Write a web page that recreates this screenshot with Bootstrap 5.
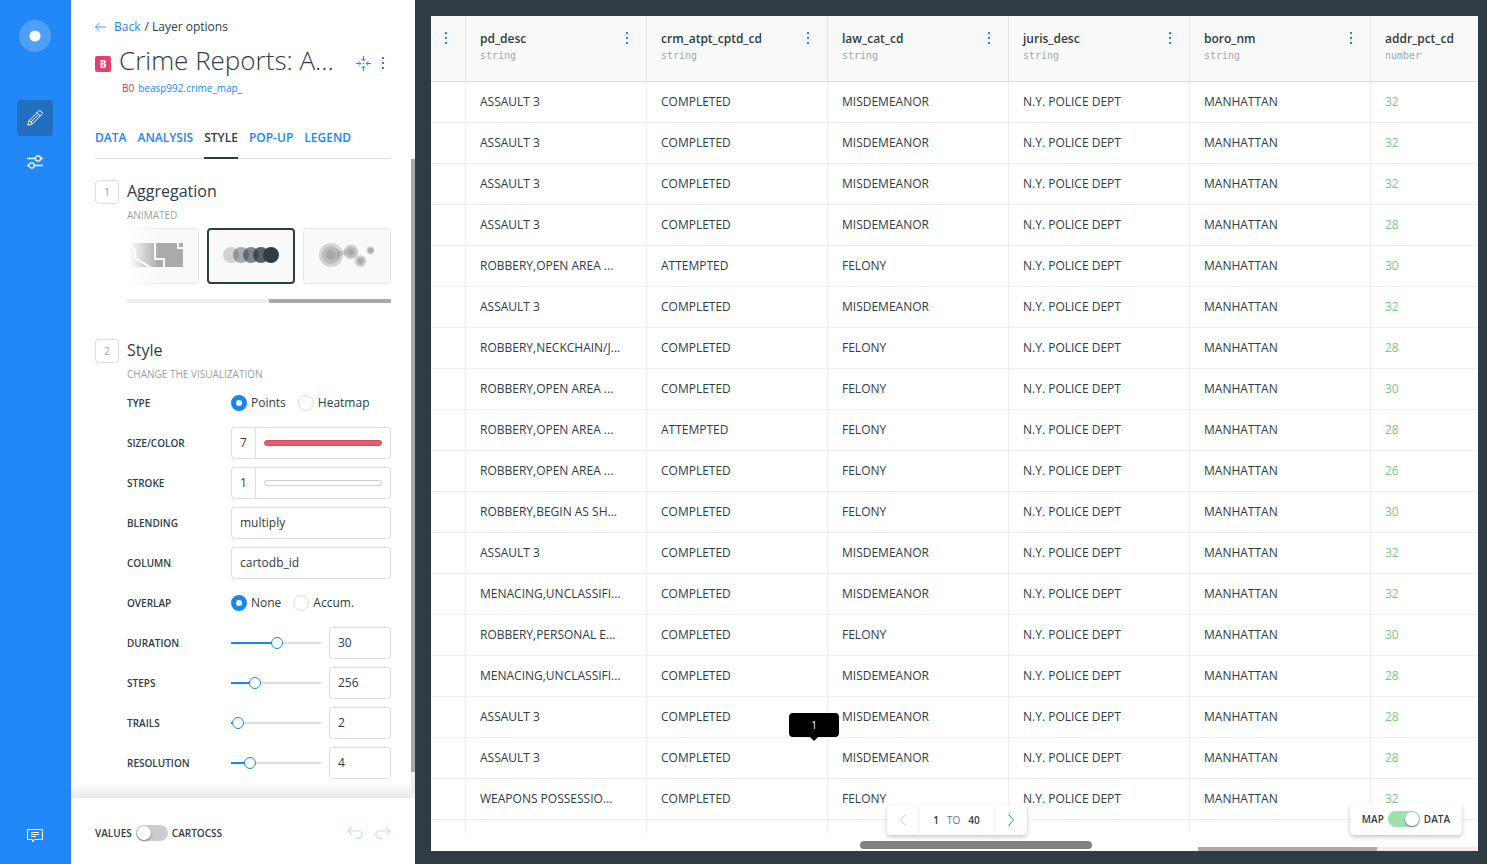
<!DOCTYPE html>
<html lang="en">
<head>
<meta charset="utf-8">
<meta name="viewport" content="width=device-width, initial-scale=1">
<title>Layer options</title>
<link href="https://cdn.jsdelivr.net/npm/bootstrap@5.3.0/dist/css/bootstrap.min.css" rel="stylesheet">
<style>
:root { --ink:#2e3c43; --blue:#1785fb; --line:#ddd; --soft:#eee; --mute:#979ea1; }
body { font-family:"Open Sans",sans-serif; font-size:12px; line-height:16px; color:var(--ink); background:var(--ink); }
a { color:var(--blue); text-decoration:none; }
button { background:none; border:0; padding:0; color:var(--blue); }
svg { display:block; }
.rail { width:71px; background:#2288f7; padding:20px 0 21px; }
.rail-btn { width:36px; height:36px; border-radius:4px; margin-left:17px; color:#fff; }
.rail-btn.on { background:#236fbf; }
.logo-link { margin:0 0 48px 19px; }
.panel { width:344px; }
.panel-head { padding:19px 24px 0; }
.title { font-size:26px; font-weight:300; line-height:34px; padding-bottom:2px; }
.layer-tag { width:16px; height:16px; margin-top:6px; border-radius:2px; background:#e7406f; color:#fff; font-size:10px; font-weight:700; }
.subline { font-size:10px; padding-left:27px; margin-top:1px; }
.pink { color:#d92b5c; }
.tabs { border-bottom:1px solid var(--line); margin-top:34px; gap:11px; }
.tabs a { font-weight:600; padding:0 0 11px; margin-bottom:-1px; border-bottom:2px solid transparent; }
.tabs a.active { color:var(--ink); border-color:var(--ink); }
.scroller { overflow:hidden; min-height:0; }
.scroll-body { padding:21px 20px 0 24px; }
.vbar { width:4px; background:var(--soft); }
.vbar div { height:96%; background:#aaa; }
.scroller::after { content:""; position:absolute; left:0; right:4px; bottom:0; height:16px; background:linear-gradient(rgba(0,0,0,0),rgba(0,0,0,.09)); }
.step-no { width:24px; height:24px; border:1px solid var(--line); border-radius:4px; font-size:10px; color:var(--mute); }
.sect { font-size:16px; line-height:22px; font-weight:400; margin:0; }
.hint { font-size:10px; line-height:14px; color:#999fa2; margin:6px 0 0; }
.section-body { width:264px; }
.carousel-strip { overflow:hidden; margin-top:6px; }
.carousel-strip::before { content:""; position:absolute; z-index:1; left:0; top:0; bottom:0; width:32px; background:linear-gradient(90deg,#fff 5%,rgba(255,255,255,0)); }
.opt { flex:0 0 88px; height:56px; border:1px solid #e8e8e8; border-radius:4px; background:#f9f9f9; padding-bottom:2px; }
.opt.on { border:2px solid var(--ink); }
.hbar { height:4px; background:var(--soft); margin-top:15px; }
.hbar div { height:4px; width:122px; background:#aaa; }
.fields { margin-top:6px; gap:8px; }
.field-row { height:32px; }
.lbl { width:104px; font-size:10px; font-weight:600; }
.ctl { width:160px; }
.box { width:100%; height:32px; border:1px solid var(--line); border-radius:4px; padding:0 8px 2px; color:var(--ink); background:#fff; appearance:none; font-size:12px; outline-color:var(--blue); }
select.box { padding-bottom:0; }
.box-num { width:62px; }
.split { width:100%; height:32px; border:1px solid var(--line); border-radius:4px; }
.split input { width:23px; height:30px; border:0; border-right:1px solid var(--line); padding:0 0 2px; text-align:center; color:var(--ink); background:none; box-sizing:content-box; }
.swatch { height:6px; border:1px solid #ccc; border-radius:3px; margin:0 8px; }
.swatch.red { background:#eb5b69; border-color:#c85060; }
.dot { appearance:none; width:16px; height:16px; border:1px solid var(--line); border-radius:50%; margin:0 4px 0 0; background:#fff; }
.dot:checked { border:5px solid var(--blue); }
.slide { appearance:none; width:90px; height:12px; margin:0; background:linear-gradient(90deg,var(--blue) var(--fill),var(--line) var(--fill)) center/100% 2px no-repeat; }
.slide::-webkit-slider-thumb { appearance:none; width:12px; height:12px; border:1px solid var(--blue); border-radius:50%; background:#fff; }
.panel-foot { height:66px; padding:4px 24px 0; font-size:10px; font-weight:600; }
.toggle { appearance:none; width:32px; height:16px; border-radius:8px; background:#c9cdcf; margin:0 4px; padding:1px; display:flex; }
.toggle::before { content:""; width:14px; height:14px; border-radius:50%; background:#fff; box-shadow:0 1px 2px rgba(0,0,0,.45); }
.toggle:checked { background:#9fdfb0; justify-content:flex-end; }
.board { margin:16px 9px 13px 16px; min-width:0; }
.sheet { overflow:hidden; min-height:0; }
.grid-table { table-layout:fixed; width:1121px; border-collapse:separate; border-spacing:0; }
.grid-table th { height:66px; background:#f9f9f9; border-right:1px solid #e4e4e4; border-bottom:1px solid var(--line); vertical-align:top; padding:15px 14px 0; font-weight:600; }
.grid-table td { height:41px; border-right:1px solid var(--soft); border-bottom:1px solid var(--soft); padding:0 14px; white-space:nowrap; }
.grid-table tr.tail td { height:20px; border-bottom:0; }
.grid-table .num { color:#6fcc86; }
.col-menu { margin-top:1px; }
.kind { font-family:"DejaVu Sans Mono",monospace; font-size:10px; font-weight:400; color:#a0a6a8; display:block; line-height:18px; }
.name { display:block; }
.strip { height:18px; }
.pill { width:22.1%; height:8px; border-radius:4px; background:#808080; margin:8px 0 0 41%; }
.track { width:26.7%; height:4px; background:var(--soft); }
.track div { width:64%; height:4px; background:#aaa; }
.floaty { background:#fff; border-radius:4px; box-shadow:0 2px 4px rgba(0,0,0,.22); font-size:10px; font-weight:600; }
.pager { left:calc(50% + 2px); transform:translateX(-50%); bottom:16px; width:140px; height:30px; }
.pager button { width:32px; height:26px; }
.pager-text { border:solid #f2f2f2; border-width:0 1px; height:26px; }
.modes { right:16px; bottom:16px; height:32px; padding:0 12px; }
.tip { left:358px; bottom:114px; width:50px; height:24px; background:#000; color:#fff; border-radius:4px; font-size:10px; }
.tip::after { content:""; position:absolute; top:100%; left:50%; margin-left:-4px; border:4px solid transparent; border-top-color:#000; border-bottom:0; }
</style>
</head>
<body>
<div class="d-flex vh-100 overflow-hidden">
  <nav class="rail d-flex flex-column flex-shrink-0" aria-label="Main">
    <a href="#" class="logo-link" aria-label="Home"><svg width="32" height="32"><circle cx="16" cy="16" r="16" fill="#fff" fill-opacity=".2"/><circle cx="16" cy="16" r="5.600" fill="#fff"/></svg></a>
    <button class="rail-btn on d-flex align-items-center justify-content-center" aria-label="Edit"><svg width="16" height="16" fill="none" stroke="#fff"><path d="M.8 15.200l1.200-4.500L11.300 1.400q1.300-1.300 2.700-.200l.8.800q1.100 1.400-.200 2.700L5.300 14zM10 2.700l3.300 3.300M11.300 4.700L3.800 12.200M2 10.700q1.800 0 1.800 1.500 1.500 0 1.500 1.800"/></svg></button>
    <button class="rail-btn d-flex align-items-center justify-content-center mt-2" aria-label="Settings"><svg width="16" height="14" fill="none" stroke="#fff" stroke-width="1.300"><path d="M0 3.500h8.500M13.500 3.500H16M0 10.500h2M7.500 10.500H16"/><circle cx="11" cy="3.500" r="2.600"/><circle cx="4.700" cy="10.500" r="2.600"/></svg></button>
    <button class="rail-btn d-flex align-items-end justify-content-center mt-auto" aria-label="Feedback"><svg width="16" height="14" fill="none" stroke="#fff"><path d="M.5.500h15v10h-8L5.500 13v-2.500h-5zM4 3.500h8M4 5.500h8M4 7.500h5"/></svg></button>
  </nav>

  <aside class="panel bg-white d-flex flex-column flex-shrink-0">
    <header class="panel-head">
      <div class="d-flex align-items-center">
        <a href="#" class="d-flex align-items-center"><svg class="me-2" width="11" height="10" fill="none" stroke="#1785fb" stroke-width=".8"><path d="M11.500 5H.5M4.500.800L.500 5l4 4.200"/></svg>Back</a><span class="ms-1">/ Layer options</span>
      </div>
      <div class="d-flex align-items-center mt-2">
        <span class="layer-tag d-flex align-items-center justify-content-center">B</span>
        <h1 class="title ms-2 mb-0 flex-grow-1 text-nowrap">Crime Reports: A...</h1>
        <button class="me-1 mt-1" aria-label="Center map"><svg width="15" height="15" fill="none" stroke="#1785fb"><path d="M7.500 0v4.500M7.500 15v-4.500M0 7.500h4.500M15 7.500h-4.500M5.300 2.700l2.200 2.200 2.200-2.200M5.300 12.300l2.200-2.200 2.200 2.200M2.700 5.300l2.200 2.200-2.200 2.200M12.300 5.300l-2.200 2.200 2.200 2.200M7 7.500h1"/></svg></button>
        <button class="px-1 mt-1" aria-label="More options"><svg width="8" height="12" fill="#1785fb"><path d="M3 0h2v2H3zM3 5h2v2H3zM3 10h2v2H3z"/></svg></button>
      </div>
      <div class="subline"><span class="pink me-1">B0</span><a href="#">beasp992.crime_map_</a></div>
      <nav class="tabs d-flex" aria-label="Layer sections"><a href="#">DATA</a><a href="#">ANALYSIS</a><a href="#" class="active">STYLE</a><a href="#">POP-UP</a><a href="#">LEGEND</a></nav>
    </header>

    <div class="scroller position-relative d-flex flex-grow-1">
      <div class="scroll-body flex-grow-1">
        <section class="d-flex gap-2 align-items-start">
          <span class="step-no d-flex align-items-center justify-content-center">1</span>
          <div class="section-body">
            <h2 class="sect">Aggregation</h2>
            <p class="hint">ANIMATED</p>
            <div class="carousel-strip position-relative d-flex justify-content-end gap-2">
              <button class="opt d-flex align-items-center justify-content-center" aria-label="Regions"><svg width="56" height="24"><path fill="#aaa" d="M0 0h56v24H0z"/><path d="M0-1l8 8v8l18 11M28-1v17h9v9M51-1v6h6" fill="none" stroke="#f9f9f9" stroke-width="2"/></svg></button>
              <button class="opt on d-flex align-items-center justify-content-center" aria-label="Animated"><svg width="56" height="16" fill="#2e3c43"><circle cx="8" cy="8" r="8" opacity=".2"/><circle cx="18" cy="8" r="8" opacity=".4"/><circle cx="28" cy="8" r="8" opacity=".6"/><circle cx="38" cy="8" r="8" opacity=".8"/><circle cx="48" cy="8" r="8"/></svg></button>
              <button class="opt d-flex align-items-center justify-content-center" aria-label="Pixel"><svg width="56" height="24" fill="#777" fill-opacity=".27"><circle cx="12" cy="12" r="12"/><circle cx="12" cy="12" r="9"/><circle cx="12" cy="12" r="5"/><circle cx="32" cy="9" r="7.500"/><circle cx="32" cy="9" r="5.500"/><circle cx="32" cy="9" r="3"/><path d="M18 6q5 4 9 0v6q-4-1-9 5z"/><circle cx="41.500" cy="18" r="6"/><circle cx="41.500" cy="18" r="4.200"/><circle cx="41.500" cy="18" r="2.500"/><circle cx="51.500" cy="7.500" r="4"/><circle cx="51.500" cy="7.500" r="3"/><circle cx="51.500" cy="7.500" r="2"/></svg></button>
            </div>
            <div class="hbar d-flex justify-content-end"><div></div></div>
          </div>
        </section>

        <section class="d-flex gap-2 align-items-start mt-4 pt-2">
          <span class="step-no d-flex align-items-center justify-content-center mt-1">2</span>
          <div class="section-body mt-1">
            <h2 class="sect">Style</h2>
            <p class="hint">CHANGE THE VISUALIZATION</p>
            <form class="fields d-flex flex-column">
              <div class="field-row d-flex align-items-center"><span class="lbl">TYPE</span><div class="d-flex gap-2 ctl" role="radiogroup" aria-label="Type"><label class="d-flex me-1"><input class="dot" type="radio" name="type" checked>Points</label><label class="d-flex text-nowrap"><input class="dot" type="radio" name="type">Heatmap</label></div></div>
              <div class="field-row d-flex align-items-center"><label class="lbl" for="size">SIZE/COLOR</label><div class="ctl"><div class="split d-flex align-items-center"><input id="size" type="text" value="7"><div class="swatch red flex-grow-1"></div></div></div></div>
              <div class="field-row d-flex align-items-center"><label class="lbl" for="stroke">STROKE</label><div class="ctl"><div class="split d-flex align-items-center"><input id="stroke" type="text" value="1"><div class="swatch flex-grow-1"></div></div></div></div>
              <div class="field-row d-flex align-items-center"><label class="lbl" for="blend">BLENDING</label><div class="ctl"><select id="blend" class="box"><option>multiply</option></select></div></div>
              <div class="field-row d-flex align-items-center"><label class="lbl" for="col">COLUMN</label><div class="ctl"><select id="col" class="box"><option>cartodb_id</option></select></div></div>
              <div class="field-row d-flex align-items-center"><span class="lbl">OVERLAP</span><div class="d-flex gap-2 ctl" role="radiogroup" aria-label="Overlap"><label class="d-flex me-1"><input class="dot" type="radio" name="overlap" checked>None</label><label class="d-flex"><input class="dot" type="radio" name="overlap">Accum.</label></div></div>
              <div class="field-row d-flex align-items-center"><label class="lbl" for="dur">DURATION</label><div class="ctl d-flex align-items-center gap-2"><input class="slide" type="range" aria-label="Duration slider" value="51" style="--fill:51%"><input id="dur" class="box box-num" type="text" value="30"></div></div>
              <div class="field-row d-flex align-items-center"><label class="lbl" for="steps">STEPS</label><div class="ctl d-flex align-items-center gap-2"><input class="slide" type="range" aria-label="Steps slider" value="23" style="--fill:23%"><input id="steps" class="box box-num" type="text" value="256"></div></div>
              <div class="field-row d-flex align-items-center"><label class="lbl" for="trails">TRAILS</label><div class="ctl d-flex align-items-center gap-2"><input class="slide" type="range" aria-label="Trails slider" value="1" style="--fill:1%"><input id="trails" class="box box-num" type="text" value="2"></div></div>
              <div class="field-row d-flex align-items-center"><label class="lbl" for="res">RESOLUTION</label><div class="ctl d-flex align-items-center gap-2"><input class="slide" type="range" aria-label="Resolution slider" value="17" style="--fill:17%"><input id="res" class="box box-num" type="text" value="4"></div></div>
            </form>
          </div>
        </section>
      </div>
      <div class="vbar flex-shrink-0"><div></div></div>
    </div>

    <footer class="panel-foot d-flex align-items-center flex-shrink-0">
      <label class="d-flex align-items-center me-auto">VALUES<input class="toggle" type="checkbox" role="switch">CARTOCSS</label>
      <button class="me-2 pe-1" aria-label="Undo"><svg width="16" height="12" fill="none" stroke="#c4dffb" stroke-width="1.200"><path d="M5 0L1 4l4 4M1 4h10.500a3.500 3.500 0 0 1 0 7.300H8"/></svg></button>
      <button aria-label="Redo"><svg width="16" height="12" fill="none" stroke="#c4dffb" stroke-width="1.200"><path d="M11 0l4 4-4 4M15 4H4.500a3.500 3.500 0 0 0 0 7.300H8"/></svg></button>
    </footer>
  </aside>

  <main class="board bg-white flex-grow-1 d-flex flex-column position-relative">
    <div class="sheet flex-grow-1">
      <table class="grid-table">
        <colgroup id="cols"></colgroup>
        <thead><tr id="heads"></tr></thead>
        <tbody id="rows"></tbody>
      </table>
    </div>
    <div class="strip d-flex justify-content-between flex-shrink-0"><div class="pill"></div><div class="track align-self-end"><div></div></div></div>
    <div class="tip position-absolute d-flex align-items-center justify-content-center" role="tooltip">1</div>
    <div class="pager floaty position-absolute d-flex align-items-center">
      <button aria-label="Previous page"><svg class="mx-auto" width="6" height="12" fill="none" stroke="#ccc"><path d="M5.500.500l-5 5.500 5 5.500"/></svg></button>
      <div class="pager-text flex-grow-1 d-flex align-items-center justify-content-center gap-2"><span>1</span><span class="fw-normal text-secondary">TO</span><span>40</span></div>
      <button aria-label="Next page"><svg class="mx-auto" width="6" height="12" fill="none" stroke="#1785fb"><path d="M.500.500l5 5.500-5 5.500"/></svg></button>
    </div>
    <label class="modes floaty position-absolute d-flex align-items-center">MAP<input class="toggle" type="checkbox" role="switch" checked>DATA</label>
  </main>
</div>
<script src="https://cdn.jsdelivr.net/npm/bootstrap@5.3.0/dist/js/bootstrap.bundle.min.js"></script>
<script>
const dots = '<button class="col-menu float-end px-1" aria-label="Column options"><svg width="2" height="12" fill="#1785fb"><path d="M0 0h2v2H0zM0 5h2v2H0zM0 10h2v2H0z"/></svg></button>';
const columns = [['', ''], ['pd_desc', 'string'], ['crm_atpt_cptd_cd', 'string'], ['law_cat_cd', 'string'], ['juris_desc', 'string'], ['boro_nm', 'string'], ['addr_pct_cd', 'number']];
const A = 'ASSAULT 3', O = 'ROBBERY,OPEN AREA ...', U = 'MENACING,UNCLASSIFI...', C = 'COMPLETED', T = 'ATTEMPTED', M = 'MISDEMEANOR', F = 'FELONY';
const records = [[A,C,M,32],[A,C,M,32],[A,C,M,32],[A,C,M,28],[O,T,F,30],[A,C,M,32],['ROBBERY,NECKCHAIN/J...',C,F,28],[O,C,F,30],[O,T,F,28],[O,C,F,26],['ROBBERY,BEGIN AS SH...',C,F,30],[A,C,M,32],[U,C,M,32],['ROBBERY,PERSONAL E...',C,F,30],[U,C,M,28],[A,C,M,28],[A,C,M,28],['WEAPONS POSSESSIO...',C,F,32]];
document.getElementById('cols').innerHTML = columns.map((c, i) => `<col width="${i ? 181 : 35}">`).join('');
document.getElementById('heads').innerHTML = columns.map(([n, k]) => `<th scope="col">${dots}<span class="name">${n}</span><span class="kind">${k}</span></th>`).join('');
document.getElementById('rows').innerHTML = records.map(([d, s, l, p]) => `<tr><td></td><td>${d}</td><td>${s}</td><td>${l}</td><td>N.Y. POLICE DEPT</td><td>MANHATTAN</td><td class="num">${p}</td></tr>`).join('') + '<tr class="tail">' + '<td></td>'.repeat(7) + '</tr>';
</script>
</body>
</html>
